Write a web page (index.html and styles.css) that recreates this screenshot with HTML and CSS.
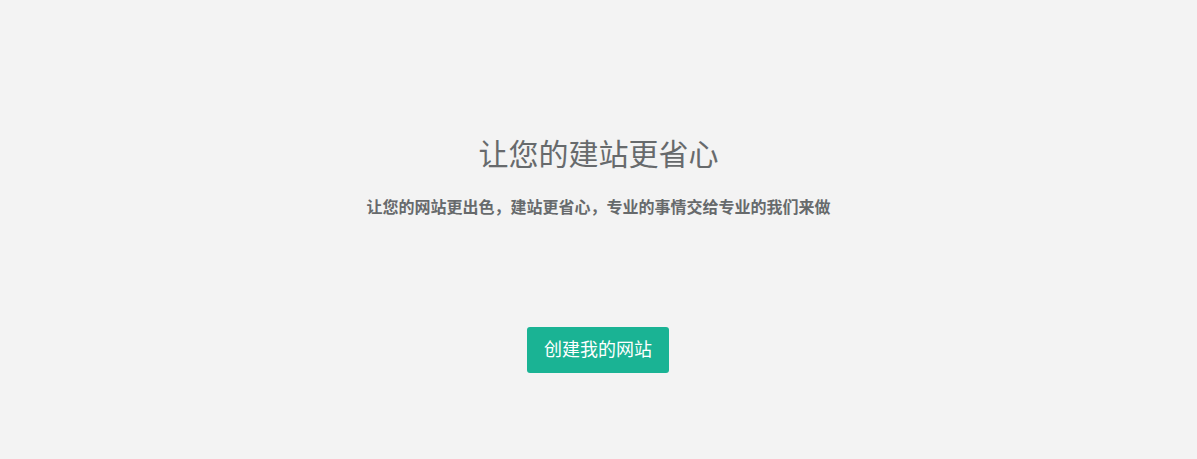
FILE: index.html
```html
<!DOCTYPE html>
<html lang="zh-CN">
<head>
<meta charset="utf-8">
<title>让您的建站更省心</title>
<link rel="stylesheet" href="styles.css">
</head>
<body>
<section class="hero">
  <h1 class="hero-title">让您的建站更省心</h1>
  <p class="hero-sub">让您的网站更出色，建站更省心，专业的事情交给专业的我们来做</p>
  <a class="hero-btn" href="#">创建我的网站</a>
</section>
</body>
</html>
```
FILE: styles.css
```css
html, body {
  margin: 0;
  padding: 0;
  background: #f3f3f3;
  height: 100%;
}
body {
  font-family: "Liberation Sans", "Noto Sans CJK SC", sans-serif;
  color: #676a6c;
}
.hero {
  display: flex;
  flex-direction: column;
  align-items: center;
  padding-top: 137px;
}
.hero-title {
  margin: 0;
  font-size: 30px;
  line-height: 36px;
  font-weight: 400;
  color: #676a6c;
}
.hero-sub {
  margin: 23px 0 0;
  font-size: 16px;
  line-height: 24px;
  font-weight: 700;
  color: #676a6c;
}
.hero-btn {
  margin: 107px 1px 0 0;
  display: block;
  width: 142px;
  height: 46px;
  line-height: 46px;
  box-sizing: border-box;
  text-align: center;
  font-size: 18px;
  color: #ffffff;
  background: #1ab394;
  border-radius: 3px;
  text-decoration: none;
}
```
